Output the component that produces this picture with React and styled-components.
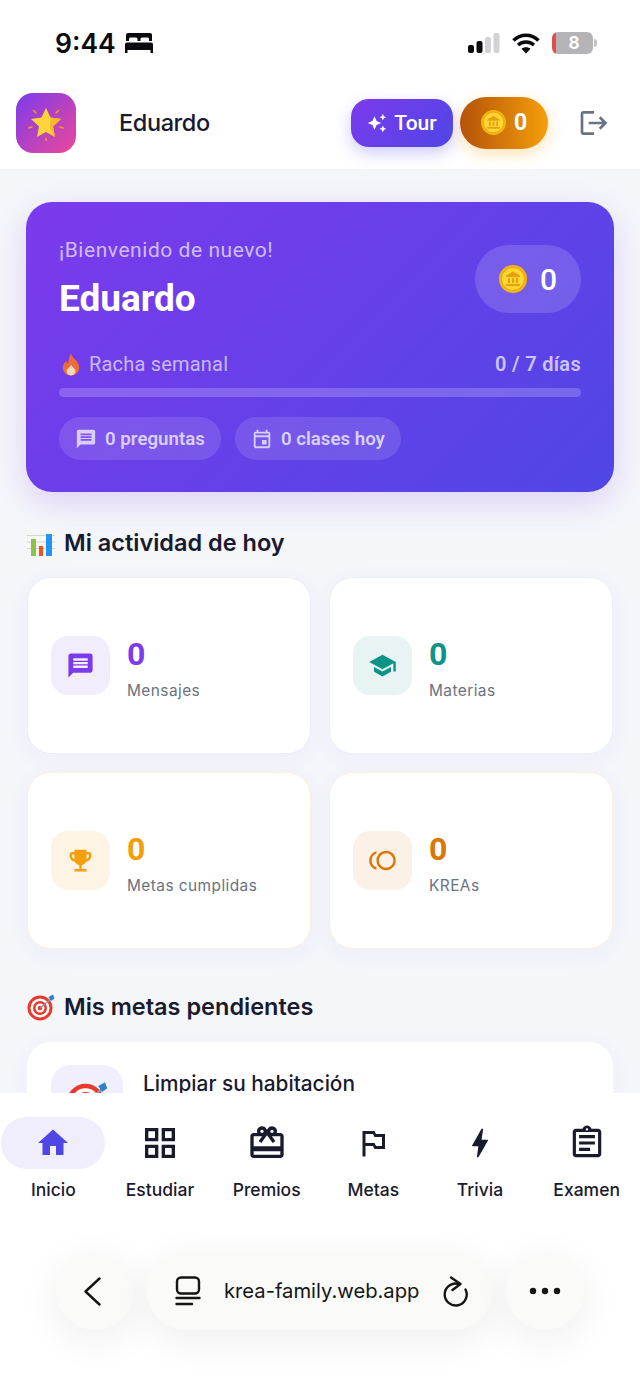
import React from 'react'
import styled, { createGlobalStyle } from 'styled-components'
import {
  MdAutoAwesome, MdLogout, MdMessage, MdOutlineEvent, MdSchool, MdEmojiEvents, MdToll, MdHome,
  MdOutlineGridView, MdOutlineRedeem, MdOutlinedFlag, MdBolt, MdOutlineAssignment,
} from 'react-icons/md'

const Global = createGlobalStyle`
  html, body { margin: 0; padding: 0; background: #fff; }
  * { box-sizing: border-box; }
  body { font-family: Inter, "Liberation Sans", sans-serif; }
`

const Page = styled.div`
  width: 640px;
  height: 1386px;
  display: flex;
  flex-direction: column;
  overflow: hidden;
  background: #fff;
`

const StatusBar = styled.div`
  height: 80px;
  flex: none;
  padding: 28px 47px 0 55px;
  display: flex;
  justify-content: space-between;
  align-items: flex-start;
`
const StatusGroup = styled.div`
  display: flex;
  align-items: center;
  gap: ${p => p.$gap || 9}px;
  height: 30px;
`
const Clock = styled.span`
  font-size: 26.5px;
  font-weight: 600;
  line-height: 30px;
  color: #0b0b0f;
`
const Battery = styled.div`
  width: 41px;
  height: 22px;
  border-radius: 6px;
  background: linear-gradient(90deg, #e5484d 0 4px, #b4b4b6 4px);
  color: #fff;
  font-size: 17px;
  font-weight: 700;
  line-height: 22px;
  text-align: center;
  padding-left: 3px;
  position: relative;
  &::after {
    content: '';
    position: absolute;
    right: -4px;
    top: 7px;
    width: 3px;
    height: 8px;
    border-radius: 0 3px 3px 0;
    background: #c2c2c4;
  }
`

const Header = styled.header`
  height: 90px;
  flex: none;
  padding: 0 30px 4px 16px;
  display: flex;
  align-items: center;
  border-bottom: 1px solid #f2f3f8;
`
const Logo = styled.div`
  width: 60px;
  height: 60px;
  border-radius: 17px;
  background: linear-gradient(135deg, #7c3aed, #ec4899);
  display: flex;
  align-items: center;
  justify-content: center;
`
const UserName = styled.span`
  margin-left: 43px;
  flex: 1;
  font-size: 23.5px;
  font-weight: 500;
  color: #1a1a2e;
  letter-spacing: -0.4px;
`
const TourButton = styled.div`
  width: 102px;
  height: 48px;
  border-radius: 18px;
  background: linear-gradient(135deg, #7c3aed, #4f46e5);
  box-shadow: 0 6px 16px rgba(79, 70, 229, 0.28);
  color: #fff;
  display: flex;
  align-items: center;
  justify-content: center;
  gap: 7px;
  font-family: Roboto, sans-serif;
  font-size: 21px;
  font-weight: 500;
`
const CoinPill = styled.div`
  width: 88px;
  height: 52px;
  margin-left: 7px;
  margin-right: 30px;
  border-radius: 26px;
  background: linear-gradient(90deg, #b45309, #f59e0b);
  box-shadow: 0 5px 16px rgba(245, 158, 11, 0.3);
  color: #fff;
  display: flex;
  align-items: center;
  justify-content: center;
  gap: 8px;
  font-family: Roboto, sans-serif;
  font-size: 23px;
  font-weight: 700;
`
const LogoutIcon = styled(MdLogout)`
  color: #6b7280;
  flex: none;
`

const Main = styled.main`
  flex: 1;
  min-height: 0;
  overflow: hidden;
  background: #f5f6fa;
  padding: 32px 26px 0;
`

const Hero = styled.section`
  height: 290px;
  border-radius: 26px;
  padding: 36px 33px 32px;
  background: linear-gradient(135deg, #7c3aed, #4f46e5);
  box-shadow: 0 10px 32px rgba(124, 58, 237, 0.2);
  font-family: Roboto, sans-serif;
`
const HeroTop = styled.div`
  display: flex;
  justify-content: space-between;
  align-items: flex-start;
`
const Welcome = styled.div`
  font-size: 21px;
  line-height: 24px;
  color: rgba(255, 255, 255, 0.68);
  letter-spacing: 0.55px;
`
const HeroName = styled.div`
  margin-top: 14px;
  font-size: 37px;
  line-height: 46px;
  font-weight: 700;
  color: #fff;
`
const HeroCoins = styled.div`
  width: 106px;
  height: 68px;
  margin-top: 7px;
  border-radius: 34px;
  background: rgba(255, 255, 255, 0.15);
  color: #fff;
  display: flex;
  align-items: center;
  justify-content: center;
  gap: 13px;
  font-size: 30px;
  font-weight: 500;
`
const StreakRow = styled.div`
  margin-top: 30px;
  height: 24px;
  display: flex;
  justify-content: space-between;
  align-items: center;
  font-size: 20px;
  color: rgba(255, 255, 255, 0.65);
`
const StreakLabel = styled.span`
  display: flex;
  align-items: center;
  gap: 8px;
  padding-left: 2px;
  letter-spacing: 0.2px;
`
const StreakCount = styled.span`
  font-weight: 600;
  letter-spacing: 0.3px;
  color: rgba(255, 255, 255, 0.7);
`
const Track = styled.div`
  margin-top: 12px;
  height: 9px;
  border-radius: 5px;
  background: rgba(255, 255, 255, 0.2);
`
const Chips = styled.div`
  margin-top: 20px;
  display: flex;
  gap: 14px;
`
const Chip = styled.div`
  height: 43px;
  padding: 0 16px;
  border-radius: 22px;
  background: rgba(255, 255, 255, 0.12);
  color: rgba(255, 255, 255, 0.72);
  display: flex;
  align-items: center;
  gap: 8px;
  font-size: 18.7px;
  font-weight: 600;
`

const SectionTitle = styled.h2`
  margin: ${p => p.$top}px 0 0;
  height: 32px;
  display: flex;
  align-items: center;
  gap: 9px;
  padding-left: 1px;
  font-size: 23.5px;
  line-height: 32px;
  font-weight: 600;
  color: #1a1a2e;
`
const StatGrid = styled.div`
  margin-top: 18px;
  padding: 0 1px;
  display: grid;
  grid-template-columns: 1fr 1fr;
  grid-auto-rows: 177px;
  gap: 18px;
`
const StatCard = styled.div`
  border-radius: 24px;
  background: #fff;
  border: 1px solid ${p => p.$border};
  box-shadow: 0 5px 22px rgba(79, 70, 229, 0.05);
  padding-left: 23px;
  display: flex;
  align-items: center;
  gap: 17px;
`
const StatIcon = styled.div`
  width: 59px;
  height: 59px;
  border-radius: 17px;
  background: ${p => p.$bg};
  color: ${p => p.$color};
  display: flex;
  align-items: center;
  justify-content: center;
`
const StatBody = styled.div`
  padding-top: 4px;
`
const StatValue = styled.div`
  font-size: 32px;
  line-height: 38px;
  font-weight: 700;
  color: ${p => p.$color};
  font-family: Roboto, sans-serif;
`
const StatLabel = styled.div`
  margin-top: 8px;
  font-size: 15.4px;
  line-height: 20px;
  letter-spacing: 0.45px;
  color: #6b7280;
`

const GoalCard = styled.div`
  margin: 19px 1px 0;
  height: 160px;
  border-radius: 24px;
  background: #fff;
  box-shadow: 0 5px 22px rgba(79, 70, 229, 0.05);
  padding: 23px 24px;
  display: flex;
  gap: 20px;
`
const GoalIcon = styled.div`
  width: 72px;
  height: 72px;
  border-radius: 20px;
  background: #f1effd;
  display: flex;
  align-items: center;
  justify-content: center;
`
const GoalTitle = styled.div`
  margin-top: 6px;
  font-size: 20.8px;
  line-height: 26px;
  font-weight: 500;
  color: #1a1a2e;
`

const BottomArea = styled.div`
  flex: none;
  height: 293px;
  background: #fff;
`
const Nav = styled.nav`
  display: grid;
  grid-template-columns: repeat(6, 1fr);
  padding-top: 24px;
`
const NavItem = styled.div`
  display: flex;
  flex-direction: column;
  align-items: center;
  font-size: 17.5px;
  font-weight: 500;
  color: #1a1a2e;
`
const NavIcon = styled.div`
  width: 104px;
  height: 52px;
  border-radius: 26px;
  background: ${p => (p.$active ? '#f0edfd' : 'transparent')};
  color: ${p => (p.$active ? '#4f46e5' : '#1a1a2e')};
  display: flex;
  align-items: center;
  justify-content: center;
`
const NavLabel = styled.span`
  margin-top: 10px;
  line-height: 22px;
`
const Browser = styled.div`
  margin-top: 51px;
  padding: 0 56px;
  display: flex;
  align-items: center;
  gap: 13px;
`
const RoundButton = styled.div`
  width: 78px;
  height: 78px;
  flex: none;
  border-radius: 50%;
  background: #fafaf9;
  box-shadow: 0 10px 40px rgba(0, 0, 0, 0.07);
  display: flex;
  align-items: center;
  justify-content: center;
  color: #151515;
  & > svg.back {
    margin-right: 5px;
  }
`
const UrlPill = styled.div`
  flex: 1;
  height: 78px;
  border-radius: 39px;
  background: #fafaf9;
  box-shadow: 0 10px 40px rgba(0, 0, 0, 0.07);
  padding: 0 24px 0 28px;
  display: flex;
  align-items: center;
  color: #151515;
  font-size: 20.2px;
  white-space: nowrap;
`
const UrlText = styled.span`
  margin-left: 23px;
  padding-bottom: 2px;
  flex: 1;
`

const Coin = ({ size }) => (
  <svg width={size} height={size} viewBox="0 0 28 28">
    <circle cx="14" cy="14" r="14" fill="#f5b50f" />
    <circle cx="14" cy="14" r="11.5" fill="#fdd835" stroke="#eaa60c" strokeWidth="1" />
    <path d="M14 6.5 L21 10.5 V12 H7 V10.5 Z M7 19 H21 V21 H7 Z" fill="#e8a00c" />
    <path d="M9 13 H11 V18 H9 Z M13 13 H15 V18 H13 Z M17 13 H19 V18 H17 Z" fill="#e8a00c" />
  </svg>
)

const Star = () => (
  <svg width="36" height="36" viewBox="0 0 36 36">
    <path d="M18 3 L22.5 12.5 L33 14 L25 21.5 L27 32 L18 27 L9 32 L11 21.5 L3 14 L13.5 12.5 Z" fill="#ffd43b" />
    <path d="M22.5 12.5 L33 14 L25 21.5 L27 32 L22 24 Z" fill="#f9b72b" />
    <path d="M5.5 5.5 L8 8 M30.5 5.5 L28 8 M1 23 L4 22 M35 23 L32 22 M18 35.5 V33.5" stroke="#f59e0b" strokeWidth="1.6" strokeLinecap="round" />
  </svg>
)

const Flame = () => (
  <svg width="20" height="23" viewBox="0 0 22 24">
    <path d="M11 0 C12 5 20 8 20 15.5 C20 20.5 16 24 11 24 C6 24 2 20.5 2 15.5 C2 12 4 9.5 6 8 C6 10 7 11 8 11 C8 7 9 3 11 0 Z" fill="#ee6a3a" />
    <path d="M11 12 C12 15 16 16 16 19.5 C16 22 13.5 24 11 24 C8.5 24 6 22 6 19.5 C6 16.5 10 15.5 11 12 Z" fill="#fbd9b5" />
  </svg>
)

const BarChart = () => (
  <svg width="28" height="28" viewBox="0 0 28 28">
    <rect width="28" height="28" fill="#f7f7f7" />
    <path d="M0 6.5 H28 M0 13 H28 M0 19.5 H28" stroke="#d5d5d5" strokeWidth="1" />
    <rect x="4" y="10" width="5" height="17" fill="#8bc34a" />
    <rect x="12" y="17" width="4" height="10" fill="#f4511e" />
    <rect x="19" y="5" width="6" height="22" fill="#2196f3" />
  </svg>
)

const Target = ({ size }) => (
  <svg width={size} height={size} viewBox="0 0 28 28">
    <circle cx="13" cy="15" r="12.5" fill="#e8392b" />
    <circle cx="13" cy="15" r="9.5" fill="#fff" />
    <circle cx="13" cy="15" r="7" fill="#e8392b" />
    <circle cx="13" cy="15" r="4.5" fill="#fff" />
    <circle cx="13" cy="15" r="2.3" fill="#e8392b" />
    <path d="M13 15 L24 6" stroke="#8a9aa8" strokeWidth="1.4" />
    <path d="M21.5 4 L26 1.5 L27.5 5.5 L24 8 Z" fill="#2f80c8" />
  </svg>
)

const Bed = () => (
  <svg width="28" height="20" viewBox="0 0 28 20" fill="#0b0b0f">
    <path d="M3 0 H25 A2 2 0 0 1 27 2 V8 H24 V6 A1.5 1.5 0 0 0 22.5 4.5 H17 A1.5 1.5 0 0 0 15.5 6 V8 H12.5 V6 A1.5 1.5 0 0 0 11 4.5 H5.5 A1.5 1.5 0 0 0 4 6 V8 H1 V2 A2 2 0 0 1 3 0 Z" />
    <path d="M2 9.5 H26 A2 2 0 0 1 28 11.5 V20 H25.5 V17 H2.5 V20 H0 V11.5 A2 2 0 0 1 2 9.5 Z" />
  </svg>
)

const Signal = () => (
  <svg width="32" height="20" viewBox="0 0 32 20">
    <rect x="0" y="12" width="6" height="8" rx="2" fill="#0b0b0f" />
    <rect x="8.5" y="8" width="6" height="12" rx="2" fill="#0b0b0f" />
    <rect x="17" y="4" width="6" height="16" rx="2" fill="#d2d2d4" />
    <rect x="25.5" y="0" width="6" height="20" rx="2" fill="#d2d2d4" />
  </svg>
)

const Wifi = () => (
  <svg width="28" height="21" viewBox="0 0 28 21" fill="none" stroke="#0b0b0f" strokeWidth="3.4">
    <path d="M1.5 7.5 C8.5 0.5 19.5 0.5 26.5 7.5" />
    <path d="M6 12 C10.5 8 17.5 8 22 12" />
    <path d="M14 20.5 L9.5 15.8 C12 13.8 16 13.8 18.5 15.8 Z" fill="#0b0b0f" stroke="none" />
  </svg>
)

const TabsIcon = () => (
  <svg width="26" height="30" viewBox="0 0 26 30" fill="none" stroke="#151515" strokeWidth="2.4" strokeLinecap="round">
    <rect x="2" y="1.5" width="22" height="16" rx="4" />
    <path d="M1.5 22 H24.5" />
    <path d="M1.5 28 H17" />
  </svg>
)

const Reload = () => (
  <svg width="26" height="31" viewBox="0 0 26 31" fill="none" stroke="#151515" strokeWidth="2.4" strokeLinecap="round" strokeLinejoin="round">
    <path d="M16 8 A11 11 0 1 0 22.5 13.5" />
    <path d="M8 1.5 L17.5 8 L9.5 14" />
  </svg>
)

const Chevron = () => (
  <svg className="back" width="17" height="29" viewBox="0 0 17 29" fill="none" stroke="#151515" strokeWidth="2.4" strokeLinecap="round" strokeLinejoin="round">
    <path d="M15.5 1.5 L1.5 14.5 L15.5 27.5" />
  </svg>
)

const Dots = () => (
  <svg width="32" height="8" viewBox="0 0 32 8" fill="#151515">
    <circle cx="4" cy="4" r="3.2" />
    <circle cx="16" cy="4" r="3.2" />
    <circle cx="28" cy="4" r="3.2" />
  </svg>
)

const stats = [
  { label: 'Mensajes', color: '#7c3aed', bg: '#f2edfd', border: '#eeecf8', Icon: MdMessage },
  { label: 'Materias', color: '#0d9488', bg: '#e7f4f3', border: '#e9f2f2', Icon: MdSchool },
  { label: 'Metas cumplidas', color: '#f59e0b', bg: '#fef4e6', border: '#fdf1dd', Icon: MdEmojiEvents },
  { label: 'KREAs', color: '#d97706', bg: '#fbf1e6', border: '#fcefdc', Icon: MdToll },
]

const tabs = [
  { label: 'Inicio', Icon: MdHome, size: 36, active: true },
  { label: 'Estudiar', Icon: MdOutlineGridView, size: 40 },
  { label: 'Premios', Icon: MdOutlineRedeem, size: 40 },
  { label: 'Metas', Icon: MdOutlinedFlag, size: 36 },
  { label: 'Trivia', Icon: MdBolt, size: 38 },
  { label: 'Examen', Icon: MdOutlineAssignment, size: 38 },
]

export default function App() {
  return (
    <Page>
      <Global />
      <StatusBar>
        <StatusGroup>
          <Clock>9:44</Clock>
          <Bed />
        </StatusGroup>
        <StatusGroup $gap={12}>
          <Signal />
          <Wifi />
          <Battery>8</Battery>
        </StatusGroup>
      </StatusBar>

      <Header>
        <Logo><Star /></Logo>
        <UserName>Eduardo</UserName>
        <TourButton><MdAutoAwesome size={20} />Tour</TourButton>
        <CoinPill><Coin size={25} />0</CoinPill>
        <LogoutIcon size={32} />
      </Header>

      <Main>
        <Hero>
          <HeroTop>
            <div>
              <Welcome>¡Bienvenido de nuevo!</Welcome>
              <HeroName>Eduardo</HeroName>
            </div>
            <HeroCoins><Coin size={28} />0</HeroCoins>
          </HeroTop>
          <StreakRow>
            <StreakLabel><Flame />Racha semanal</StreakLabel>
            <StreakCount>0 / 7 días</StreakCount>
          </StreakRow>
          <Track />
          <Chips>
            <Chip><MdMessage size={22} />0 preguntas</Chip>
            <Chip><MdOutlineEvent size={22} />0 clases hoy</Chip>
          </Chips>
        </Hero>

        <SectionTitle $top={35}><BarChart />Mi actividad de hoy</SectionTitle>
        <StatGrid>
          {stats.map(({ label, color, bg, border, Icon }) => (
            <StatCard key={label} $border={border}>
              <StatIcon $bg={bg} $color={color}><Icon size={29} /></StatIcon>
              <StatBody>
                <StatValue $color={color}>0</StatValue>
                <StatLabel>{label}</StatLabel>
              </StatBody>
            </StatCard>
          ))}
        </StatGrid>

        <SectionTitle $top={42}><Target size={28} />Mis metas pendientes</SectionTitle>
        <GoalCard>
          <GoalIcon><Target size={42} /></GoalIcon>
          <GoalTitle>Limpiar su habitación</GoalTitle>
        </GoalCard>
      </Main>

      <BottomArea>
        <Nav>
          {tabs.map(({ label, Icon, size, active }) => (
            <NavItem key={label}>
              <NavIcon $active={active}><Icon size={size} /></NavIcon>
              <NavLabel>{label}</NavLabel>
            </NavItem>
          ))}
        </Nav>
        <Browser>
          <RoundButton><Chevron /></RoundButton>
          <UrlPill>
            <TabsIcon />
            <UrlText>krea-family.web.app</UrlText>
            <Reload />
          </UrlPill>
          <RoundButton><Dots /></RoundButton>
        </Browser>
      </BottomArea>
    </Page>
  )
}
